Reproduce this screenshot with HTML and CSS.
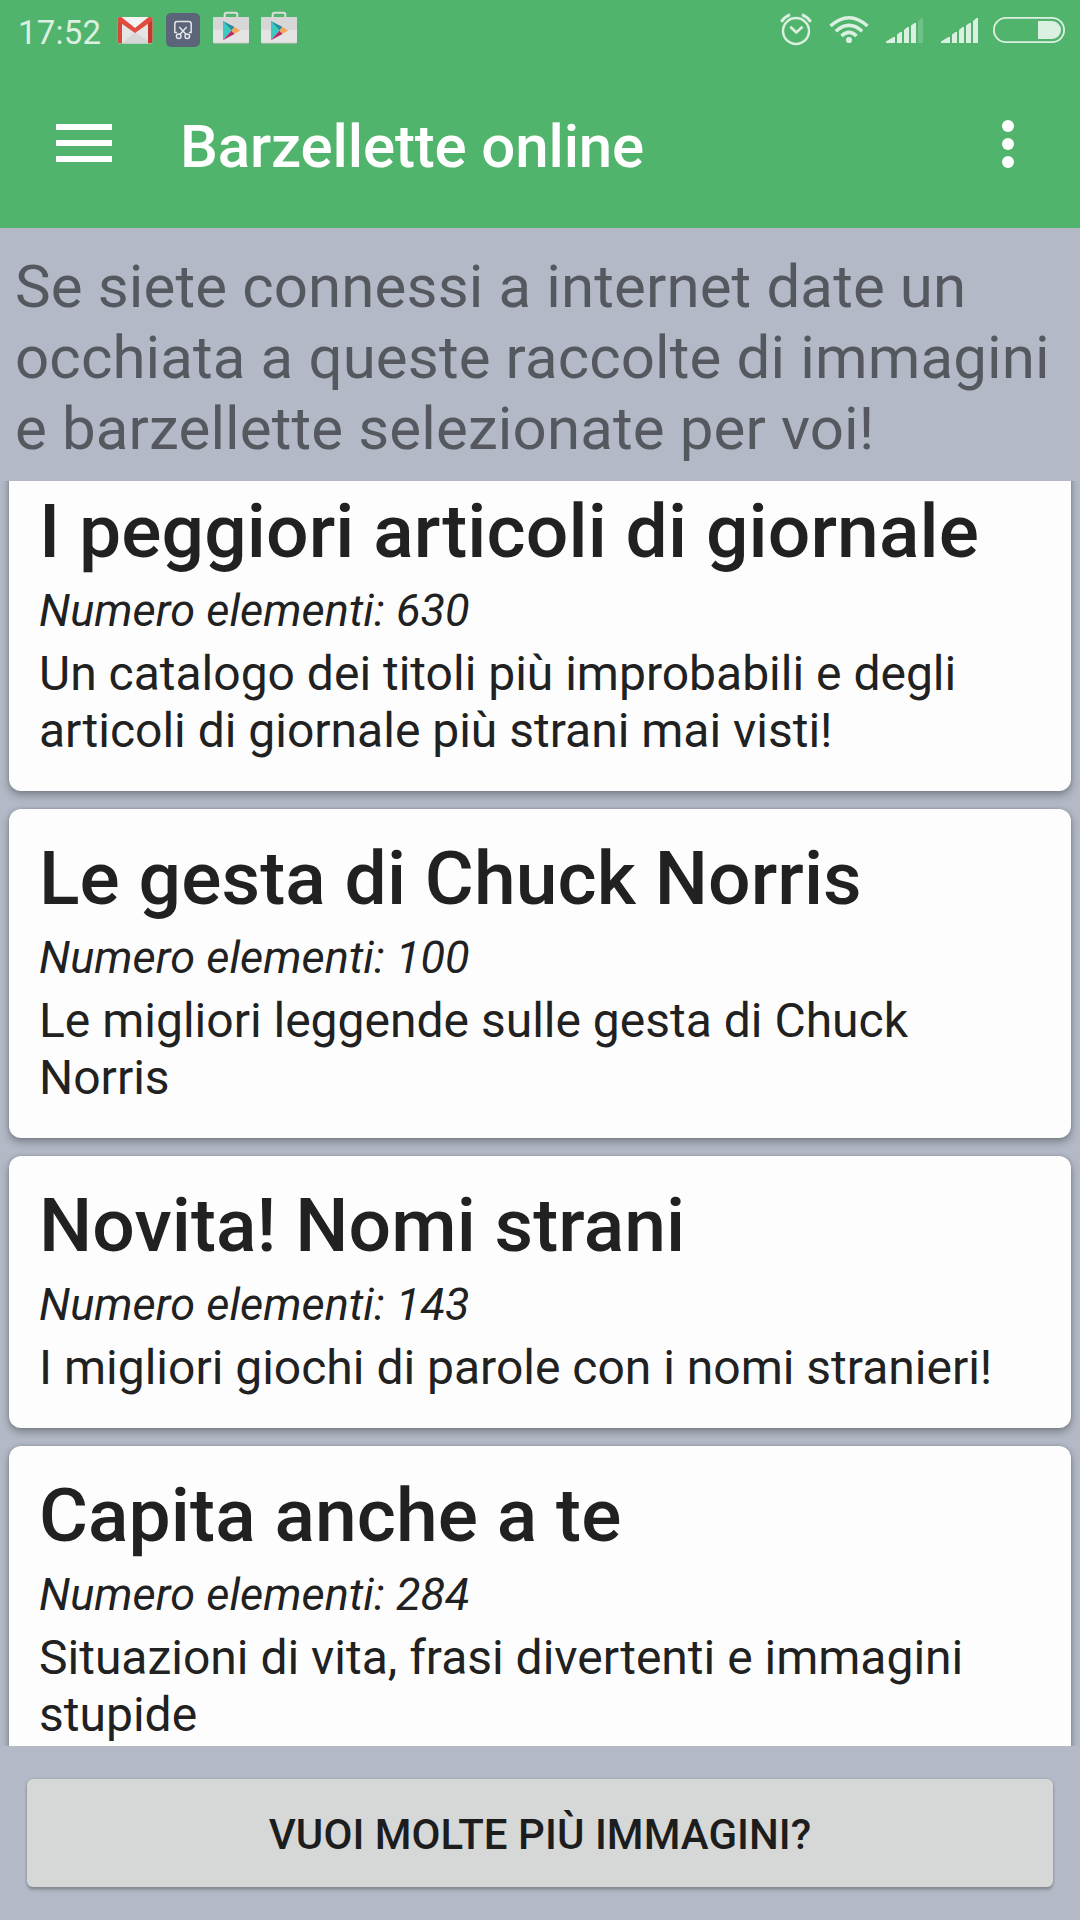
FILE: index.html
```html
<!DOCTYPE html>
<html lang="it">
<head>
<meta charset="utf-8">
<title>Barzellette online</title>
<link rel="stylesheet" href="styles.css">
</head>
<body>
<div class="screen">
  <header class="header">
    <div class="status">
      <span class="clock">17:52</span>
      <div class="notifications">
        <svg width="36" height="60" viewBox="117 0 36 60">
          <rect x="117.500" y="17" width="35" height="26.500" rx="2" fill="#e4e4e4"/>
          <path d="M122 43.500L135 32L152 43.500Z" fill="#d6d6d6"/>
          <path d="M122 17H148L135 28Z" fill="#f4f4f4"/>
          <path d="M117.500 19Q117.500 17 120 17L122 18V43.300H119.500Q117.500 43.300 117.500 41Z" fill="#d34a3d"/>
          <path d="M152.500 19Q152.500 17 150 17L148 18V43.300H150.500Q152.500 43.300 152.500 41Z" fill="#c5382c"/>
          <path d="M118 18.500Q120 16 122.500 18L135 28L147.500 18Q150 16 152 18.500L152 21L135 33L118 21Z" fill="#e04c40"/>
        </svg>
        <svg width="34" height="60" viewBox="166 0 34 60">
          <rect x="166" y="13" width="34" height="34" rx="5" fill="#5c6479"/>
          <g fill="none" stroke="#e4e6ea" stroke-width="1.500">
            <path d="M177 32.500H174.800V24Q174.800 21.600 177.200 21.600H188.800Q191.200 21.600 191.200 24V32.500H189"/>
            <path d="M179.300 27L186.200 34.600M186.700 27L179.800 34.600"/>
            <circle cx="178.700" cy="36.300" r="2.300"/>
            <circle cx="187.300" cy="36.300" r="2.300"/>
          </g>
        </svg>
        <svg class="store" width="36" height="60" viewBox="213 0 36 60">
          <path d="M224.700 18V14.500Q224.700 12.700 226.500 12.700H235.500Q237.300 12.700 237.300 14.500V18" fill="none" stroke="#dcdedc" stroke-width="2"/>
          <path d="M213 17.300H249V42Q249 43.500 247.500 43.500H214.500Q213 43.500 213 42Z" fill="#e4e4e4"/>
          <path d="M213 17.300H249V30H213Z" fill="#d7d7d7"/>
          <path d="M213.500 43.300H248.500" stroke="#8fab97" stroke-width=".7"/>
          <path d="M223 21L231.500 30.500L223 40Z" fill="#39c9c0"/>
          <path d="M223 21L234.500 27L231.500 30.500Z" fill="#258e9c"/>
          <path d="M223 40.300L234.500 34L231.500 30.500Z" fill="#b52a68"/>
          <path d="M234.500 27L240 30.500L234.500 34L231.500 30.500Z" fill="#f5a65b"/>
        </svg>
        <svg class="store" width="36" height="60" viewBox="213 0 36 60">
          <path d="M224.700 18V14.500Q224.700 12.700 226.500 12.700H235.500Q237.300 12.700 237.300 14.500V18" fill="none" stroke="#dcdedc" stroke-width="2"/>
          <path d="M213 17.300H249V42Q249 43.500 247.500 43.500H214.500Q213 43.500 213 42Z" fill="#e4e4e4"/>
          <path d="M213 17.300H249V30H213Z" fill="#d7d7d7"/>
          <path d="M213.500 43.300H248.500" stroke="#8fab97" stroke-width=".7"/>
          <path d="M223 21L231.500 30.500L223 40Z" fill="#39c9c0"/>
          <path d="M223 21L234.500 27L231.500 30.500Z" fill="#258e9c"/>
          <path d="M223 40.300L234.500 34L231.500 30.500Z" fill="#b52a68"/>
          <path d="M234.500 27L240 30.500L234.500 34L231.500 30.500Z" fill="#f5a65b"/>
        </svg>
      </div>
      <div class="system">
        <svg width="32" height="60" viewBox="780 0 32 60" fill="none" stroke="#dcf0e2">
          <circle cx="796" cy="31" r="13" stroke-width="2.400"/>
          <path d="M790.300 26.700L796.300 32.500L802.500 26.700" stroke-width="2.600"/>
          <path d="M781.300 21.800Q784.500 17 790 14.700M810.700 21.800Q807.500 17 802 14.700" stroke-width="3"/>
        </svg>
        <svg width="40" height="60" viewBox="829 0 40 60" fill="none" stroke="#dcf0e2">
          <path d="M830.500 26Q849 9.500 867.500 26M835.800 31.300Q849 19.500 862.200 31.300M841.500 36Q849 28.800 856.500 36" stroke-width="3.500"/>
          <circle cx="849" cy="40" r="3.100" fill="#dcf0e2" stroke="none"/>
        </svg>
        <svg class="signal" width="37" height="60" viewBox="886 0 37 60" fill="#dcf0e2">
          <path d="M886 43V41.500L893.500 37H895V43ZM897 43V34.500L900.500 32H902V43ZM904 43V30L907.500 27H909V43ZM911 43V25.500L914.500 23H916V43Z"/>
          <path d="M918 43V21L921.500 18H923V43Z" opacity=".22"/>
        </svg>
        <svg class="signal" width="37" height="60" viewBox="886 0 37 60" fill="#dcf0e2">
          <path d="M886 43V41.500L893.500 37H895V43ZM897 43V34.500L900.500 32H902V43ZM904 43V30L907.500 27H909V43ZM911 43V25.500L914.500 23H916V43ZM918 43V21L921.500 18H923V43Z"/>
        </svg>
        <svg width="72" height="60" viewBox="993 0 72 60">
          <rect x="993.900" y="17.900" width="70.200" height="24.200" rx="12.100" fill="none" stroke="#dcf0e2" stroke-width="1.800"/>
          <path d="M1038 21H1052A9 9 0 0 1 1052 39H1038Z" fill="#dcf0e2"/>
        </svg>
      </div>
    </div>
    <div class="toolbar">
      <svg width="56" height="38" viewBox="0 0 56 38" fill="#fff"><path d="M0 0H56V6H0ZM0 16H56V22H0ZM0 32H56V38H0Z"/></svg>
      <h1 class="title">Barzellette online</h1>
      <svg class="more" width="12" height="48" viewBox="0 0 12 48" fill="#fff"><circle cx="6" cy="6" r="6"/><circle cx="6" cy="24" r="6"/><circle cx="6" cy="42" r="6"/></svg>
    </div>
  </header>
  <p class="intro">Se siete connessi a internet date un occhiata a queste raccolte di immagini e barzellette selezionate per voi!</p>
  <main class="list">
    <article class="card">
      <h2 class="name">I peggiori articoli di giornale</h2>
      <p class="count">Numero elementi: 630</p>
      <p class="text">Un catalogo dei titoli più improbabili e degli articoli di giornale più strani mai visti!</p>
    </article>
    <article class="card">
      <h2 class="name">Le gesta di Chuck Norris</h2>
      <p class="count">Numero elementi: 100</p>
      <p class="text">Le migliori leggende sulle gesta di Chuck Norris</p>
    </article>
    <article class="card">
      <h2 class="name">Novita! Nomi strani</h2>
      <p class="count">Numero elementi: 143</p>
      <p class="text">I migliori giochi di parole con i nomi stranieri!</p>
    </article>
    <article class="card">
      <h2 class="name">Capita anche a te</h2>
      <p class="count">Numero elementi: 284</p>
      <p class="text">Situazioni di vita, frasi divertenti e immagini stupide</p>
    </article>
  </main>
  <footer class="footer">
    <button class="button">VUOI MOLTE PIÙ IMMAGINI?</button>
  </footer>
</div>
</body>
</html>
```
FILE: styles.css
```css
* { box-sizing: border-box; }
body, h1, h2, p { margin: 0; }
body { font-family: Roboto, sans-serif; background: #b3b9c6; }
svg { display: block; flex: none; }

.screen {
  width: 1080px;
  height: 1920px;
  display: flex;
  flex-direction: column;
  overflow: hidden;
}

.header { height: 228px; flex: none; background: #51b46d; }
.status {
  height: 60px;
  display: flex;
  padding: 0 15px 0 18px;
}
.clock {
  width: 99px;
  font-size: 33px;
  line-height: 39px;
  padding-top: 13px;
  letter-spacing: .2px;
  color: #dcf0e2;
}
.notifications { display: flex; gap: 13px; }
.store + .store { margin-left: -1px; }
.system { display: flex; gap: 17px; margin-left: auto; }
.system .signal + .signal { margin-left: 1px; margin-right: -2px; }

.toolbar {
  height: 168px;
  display: flex;
  align-items: flex-start;
  padding: 64px 66px 0 56px;
}
.title {
  flex: 1;
  margin: -13px 0 0 68px;
  font-size: 60px;
  line-height: 71px;
  font-weight: 500;
  letter-spacing: -.14px;
  color: #fff;
}
.more { margin-top: -4px; }

.intro {
  height: 253px;
  flex: none;
  padding: 23px 15px 0;
  font-size: 60px;
  line-height: 71px;
  letter-spacing: .13px;
  color: #55595f;
}

.list {
  height: 1265px;
  flex: none;
  display: flex;
  flex-direction: column;
  gap: 18px;
  padding: 0 9px;
  overflow: hidden;
}
.card {
  flex: none;
  padding: 25px 30px 32px;
  border-radius: 12px;
  background: #fdfdfd;
  color: #212121;
  box-shadow: 0 4px 8px rgba(40, 50, 50, .4), 0 0 3px rgba(40, 50, 50, .25);
}
.card:first-child { margin-top: -19px; }
.name { font-size: 75px; line-height: 88px; font-weight: 500; letter-spacing: .1px; white-space: nowrap; }
.count { margin-top: 9px; font-size: 45px; line-height: 53px; font-style: italic; letter-spacing: .05px; }
.text { margin-top: 8px; font-size: 48px; line-height: 57px; }

.footer { display: flex; padding: 33px 27px; }
.button {
  flex: 1;
  height: 108px;
  padding: 3px 0 0;
  border: 0;
  border-radius: 6px;
  background: #d6d8d7;
  color: #1d1d1d;
  font: 500 42px/49px Roboto, sans-serif;
  letter-spacing: .05px;
  box-shadow: 0 3px 3px rgba(60, 70, 70, .35), 0 0 2px rgba(40, 50, 50, .25);
}
```
